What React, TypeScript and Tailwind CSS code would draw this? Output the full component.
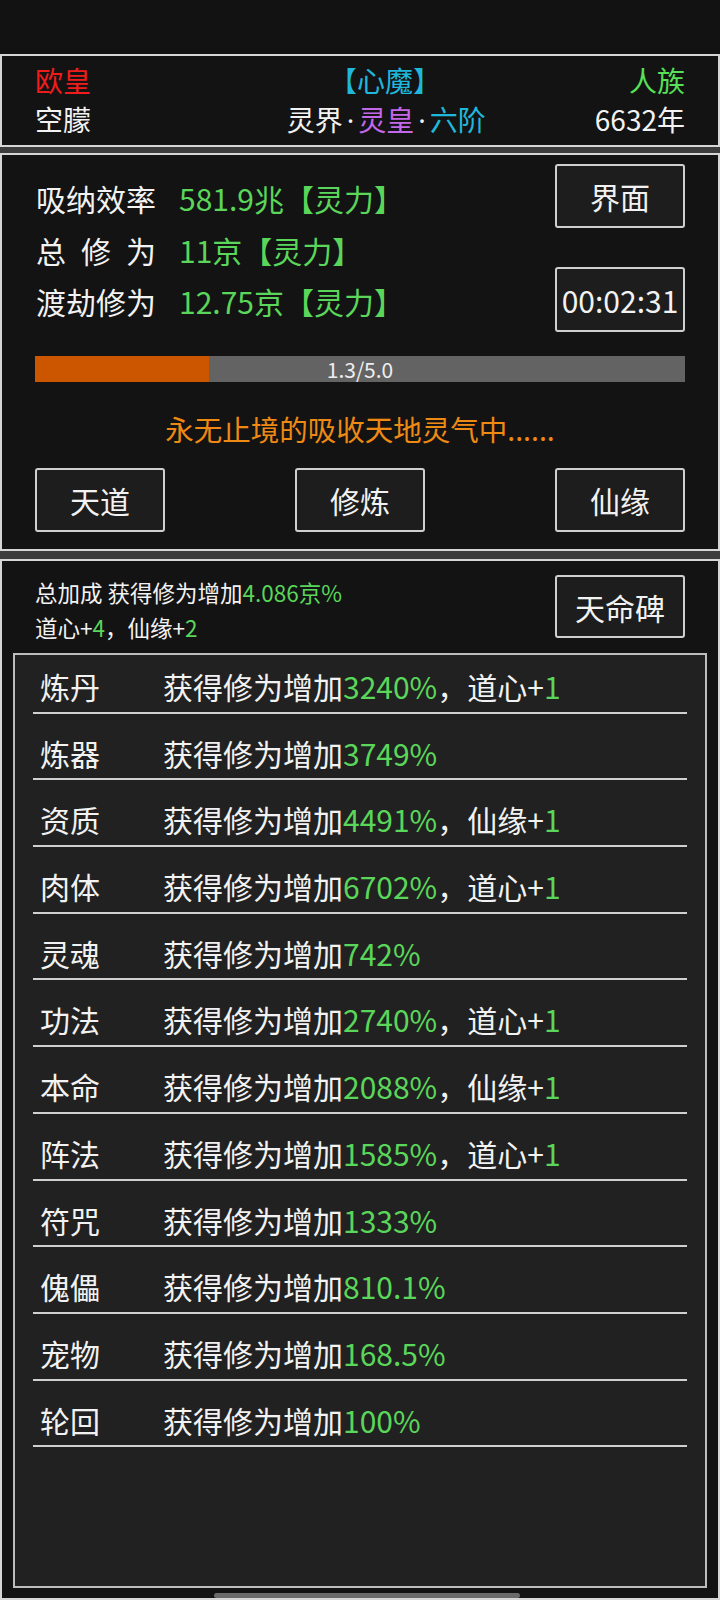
import React from 'react';

// Cultivation bonus rows
const bonusRows = [
  { name: '炼丹', value: '3240%', extra: { label: '道心', amount: '1' } },
  { name: '炼器', value: '3749%' },
  { name: '资质', value: '4491%', extra: { label: '仙缘', amount: '1' } },
  { name: '肉体', value: '6702%', extra: { label: '道心', amount: '1' } },
  { name: '灵魂', value: '742%' },
  { name: '功法', value: '2740%', extra: { label: '道心', amount: '1' } },
  { name: '本命', value: '2088%', extra: { label: '仙缘', amount: '1' } },
  { name: '阵法', value: '1585%', extra: { label: '道心', amount: '1' } },
  { name: '符咒', value: '1333%' },
  { name: '傀儡', value: '810.1%' },
  { name: '宠物', value: '168.5%' },
  { name: '轮回', value: '100%' },
];

const stats = [
  { label: ['吸', '纳', '效', '率'], value: '581.9兆【灵力】' },
  { label: ['总', '修', '为'], value: '11京【灵力】' },
  { label: ['渡', '劫', '修', '为'], value: '12.75京【灵力】' },
];

const GameButton: React.FC<{ children: React.ReactNode; className?: string }> = ({ children, className = '' }) => (
  <button
    className={`flex items-center justify-center w-[130px] border-2 border-[#cfcfcf] rounded-[3px] bg-[#1d1d1d] text-[30px] text-[#f2f2f2] leading-none ${className}`}
  >
    {children}
  </button>
);

const Dot: React.FC = () => <span className="px-[4px] font-['Noto_Sans',sans-serif]">·</span>;

const App: React.FC = () => {
  const progress = 1.3 / 5.0;

  return (
    <div className="relative h-[1600px] flex flex-col bg-[#3c3c3c] font-['Noto_Sans_CJK_SC',sans-serif] text-[#f2f2f2]">
      {/* Status bar */}
      <div className="h-[54px] shrink-0 bg-[#121212]" />

      {/* Identity panel */}
      <div className="shrink-0 h-[93px] border-2 border-[#d6d6d6] bg-[#131313] px-[33px] pt-[5px] text-[28px] leading-[39px]">
        <div className="grid grid-cols-3">
          <div className="text-[#f01c1c]">欧皇</div>
          <div className="pl-[50px] text-center text-[#1fb8dc]">【心魔】</div>
          <div className="text-right text-[#58e058]">人族</div>
        </div>
        <div className="grid grid-cols-3">
          <div>空朦</div>
          <div className="pl-[35px] whitespace-nowrap">
            灵界<Dot /><span className="text-[#c468ea]">灵皇</span><Dot /><span className="text-[#1fb8dc]">六阶</span>
          </div>
          <div className="text-right">6632年</div>
        </div>
      </div>

      {/* Cultivation panel */}
      <div className="shrink-0 mt-[6px] h-[398px] border-2 border-[#d6d6d6] bg-[#131313] px-[33px] pt-[9px]">
        <div className="flex justify-between">
          <div className="pt-[9px] pl-[1px]">
            {stats.map((s) => (
              <div key={s.value} className="flex h-[51.5px] items-center text-[30px] whitespace-nowrap">
                <span className="w-[120px] flex justify-between">
                  {s.label.map((c) => (
                    <span key={c}>{c}</span>
                  ))}
                </span>
                <span className="ml-[23px] text-[#5ad65a]">{s.value}</span>
              </div>
            ))}
          </div>
          <div className="flex flex-col gap-[39px]">
            <GameButton className="h-[64px]">界面</GameButton>
            <GameButton className="h-[65px]">00:02:31</GameButton>
          </div>
        </div>

        {/* Progress bar */}
        <div className="relative mt-[24px] h-[26px] bg-[#636363]">
          <div className="h-full bg-[#cc5500]" style={{ width: `${progress * 100 + 0.7}%` }} />
          <div className="absolute inset-0 flex items-center justify-center text-[21px] leading-none text-[#eeeeee]">
            1.3/5.0
          </div>
        </div>

        <div className="mt-[27px] text-center text-[28.5px] leading-[40px] text-[#ee8a14]">
          永无止境的吸收天地灵气中......
        </div>

        <div className="mt-[19px] flex justify-between">
          <GameButton className="h-[64px]">天道</GameButton>
          <GameButton className="h-[64px]">修炼</GameButton>
          <GameButton className="h-[64px]">仙缘</GameButton>
        </div>
      </div>

      {/* Bonus panel */}
      <div className="flex-1 mt-[8px] flex flex-col border-2 border-[#d6d6d6] bg-[#131313] pt-[14px]">
        <div className="flex h-[63px] justify-between px-[33px]">
          <div className="text-[22.5px] leading-[35px] whitespace-nowrap">
            <div>
              总加成 获得修为增加<span className="text-[#5ad65a]">4.086京%</span>
            </div>
            <div>
              道心+<span className="text-[#5ad65a]">4</span>，仙缘+<span className="text-[#5ad65a]">2</span>
            </div>
          </div>
          <GameButton className="h-[63px]">天命碑</GameButton>
        </div>

        <div className="flex-1 mt-[15px] mx-[11px] mb-[10px] border-2 border-[#bdbdbd] bg-[#212121] px-[18px]">
          {bonusRows.map((row) => (
            <div
              key={row.name}
              className="pt-[19px] first:pt-[11px] pb-[5.7px] border-b-2 border-[#d0d0d0] flex text-[30px] leading-[40px] whitespace-nowrap"
            >
              <span className="w-[130px] pl-[7px]">{row.name}</span>
              <span>
                获得修为增加<span className="text-[#5ad65a]">{row.value}</span>
                {row.extra && (
                  <>
                    ，{row.extra.label}+<span className="text-[#5ad65a]">{row.extra.amount}</span>
                  </>
                )}
              </span>
            </div>
          ))}
        </div>
      </div>

      {/* Home indicator */}
      <div className="absolute bottom-[2px] left-[214px] w-[306px] h-[5px] rounded-full bg-[#6a6a6a]" />
    </div>
  );
};

export default App;
